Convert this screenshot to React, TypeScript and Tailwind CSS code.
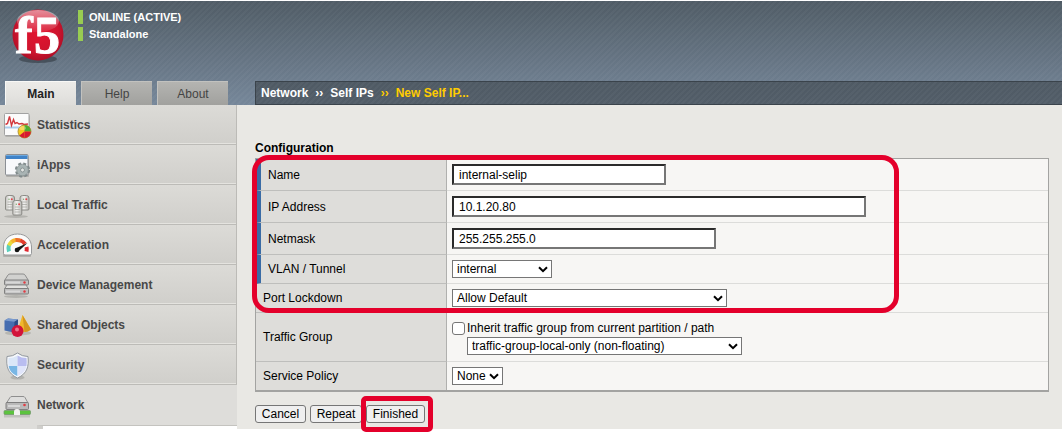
import type { ReactNode } from "react";

const Shadow = () => (
  <ellipse cx="16" cy="27.500" rx="12" ry="1.500" fill="#8f8e8a" opacity=".45" />
);

const StatisticsIcon = () => (
  <svg width="32" height="32" viewBox="0 0 32 32" aria-hidden="true">
    <rect x="5" y="6" width="25" height="22" rx="1.500" fill="#8f8e8a" opacity=".45" />
    <rect x="4.500" y="4.500" width="24.500" height="22" rx="1" fill="#fbfbfb" stroke="#a2a2a2" />
    <path d="M5 18.500h23.500" stroke="#a9cdec" strokeWidth="2" />
    <path d="M5.500 15.500l2-1 2-7 2 9 2-6 1.500 4 2-1 2 1.500 3-.5 2 1 4-.5" fill="none" stroke="#d2373c" strokeWidth="1.400" />
    <circle cx="24.500" cy="22.500" r="6.500" fill="#f5c91c" stroke="#a1842a" strokeWidth=".8" />
    <path d="M24.500 22.500V16.100A6.400 6.400 0 0 1 30.900 22.500Z" fill="#4bad35" />
    <path d="M24.500 22.500H30.900A6.400 6.400 0 0 1 24.500 28.900Z" fill="#d71930" />
    <path d="M24.500 22.500V28.900A6.400 6.400 0 0 1 19.500 26.500Z" fill="#d71930" />
    <ellipse cx="22.500" cy="19" rx="3.500" ry="2" fill="#fff" opacity=".3" />
  </svg>
);

const IAppsIcon = () => (
  <svg width="32" height="32" viewBox="0 0 32 32" aria-hidden="true">
    <rect x="6" y="7" width="23" height="21" rx="1" fill="#8f8e8a" opacity=".5" />
    <rect x="5.500" y="5.500" width="22.500" height="20.500" rx="1" fill="#f8f9fb" stroke="#8b8f94" />
    <rect x="6" y="6" width="21.500" height="4" fill="#3f83c8" />
    <path d="M6 6.500h21.500" stroke="#6da9df" />
    <circle cx="22.500" cy="21" r="6.300" fill="none" stroke="#7f898a" strokeWidth="2.600" strokeDasharray="2.900 2.048" />
    <circle cx="22.500" cy="21" r="5.800" fill="#a9b4b4" stroke="#8b9596" strokeWidth=".8" />
    <circle cx="22.500" cy="21" r="2" fill="#e2e4e2" stroke="#7f898a" strokeWidth=".8" />
  </svg>
);

const Tower = ({ x, y }: { x: number; y: number }) => (
  <g>
    <path
      d={`M${x} ${y + 3}q0-2.500 2.500-2.500h4q2.500 0 2.500 2.500v11q0 1-1 1h-7q-1 0-1-1z`}
      fill="url(#tower)"
      stroke="#85847f"
      strokeWidth=".9"
    />
    <path d={`M${x + 2} ${y + 7}h5M${x + 2} ${y + 9.5}h5M${x + 2} ${y + 12}h5`} stroke="#aaa9a5" strokeWidth=".8" />
    <circle cx={x + 6.3} cy={y + 4.3} r="1" fill="#e0434a" />
    <circle cx={x + 3.5} cy={y + 4.3} r=".7" fill="#7da56c" />
  </g>
);

const LocalTrafficIcon = () => (
  <svg width="32" height="32" viewBox="0 0 32 32" aria-hidden="true">
    <defs>
      <linearGradient id="tower">
        <stop offset="0" stopColor="#c2c1bd" />
        <stop offset=".45" stopColor="#f2f2f0" />
        <stop offset="1" stopColor="#b4b3af" />
      </linearGradient>
    </defs>
    <Shadow />
    <Tower x={5.5} y={6} />
    <Tower x={20} y={6} />
    <Tower x={12.8} y={11} />
  </svg>
);

const AccelerationIcon = () => (
  <svg width="32" height="32" viewBox="0 0 32 32" aria-hidden="true">
    <path d="M3 23v4q0 1 1 1h26q1 0 1-1v-4z" fill="#8f8e8a" opacity=".5" />
    <path d="M3.500 24.500V18C3.500 10.500 9 5 17.500 5S31.500 10.500 31.500 18v6.500q0 1.500-1.500 1.500H5q-1.500 0-1.500-1.500z" fill="#fbfbfb" stroke="#97999a" />
    <g fill="none" strokeWidth="4">
      <path d="M9 22.500A9.500 9.500 0 0 1 9 16" stroke="#5cd0bd" />
      <path d="M9 16.500A9.500 9.500 0 0 1 12 12.500" stroke="#e9d93e" />
      <path d="M11.600 12.900A9.500 9.500 0 0 1 16 11" stroke="#f6b42b" />
      <path d="M15.500 11A9.500 9.500 0 0 1 21 11.800" stroke="#ef6f29" />
      <path d="M20.500 11.500A9.500 9.500 0 0 1 25 15" stroke="#e23c2d" />
      <path d="M26.500 18A10 10 0 0 1 26.500 22.500" stroke="#df2830" />
    </g>
    <path d="M27.500 14L18.200 22.500A2.200 2.200 0 0 1 15.800 19.300Z" fill="#131313" />
    <circle cx="17" cy="21" r="2.300" fill="#131313" />
  </svg>
);

const DeviceIcon = () => (
  <svg width="32" height="32" viewBox="0 0 32 32" aria-hidden="true">
    <Shadow />
    <path d="M4.500 11.500L8 6q.5-1 2-1h13q1.500 0 2 1L28.500 11.500z" fill="#d1d1cf" stroke="#858585" strokeWidth=".9" />
    <rect x="4.500" y="11" width="24" height="5" rx="1" fill="#bfbfbf" stroke="#777" strokeWidth=".9" />
    <path d="M4.500 20L7 16h19L28.500 20z" fill="#e1e1df" stroke="#858585" strokeWidth=".9" />
    <rect x="4.500" y="19.500" width="24" height="5.500" rx="1" fill="#bdbdbd" stroke="#777" strokeWidth=".9" />
    <path d="M6 13.500h14M6 22.500h14" stroke="#d8d8d8" strokeWidth="2" />
    <circle cx="24.500" cy="13.500" r="1.200" fill="#e23b42" />
    <circle cx="24.500" cy="22.500" r="1.200" fill="#e23b42" />
  </svg>
);

const SharedObjectsIcon = () => (
  <svg width="32" height="32" viewBox="0 0 32 32" aria-hidden="true">
    <ellipse cx="18" cy="24" rx="13" ry="2.500" fill="#8f8e8a" opacity=".4" />
    <path d="M4.500 11.500L8 9.500 18 10.500 17.500 21.500 14 23.500 4.500 21.500z" fill="#466db0" />
    <path d="M4.500 11.500L8 9.500 18 10.500 14.500 12.800z" fill="#7b9bcd" />
    <path d="M14.500 12.800L18 10.500 17.500 21.500 14 23.500z" fill="#2b4a86" />
    <path d="M22.500 6L31 20.500Q26 24.500 17.500 22z" fill="#f0b82c" />
    <path d="M22.500 6L31 20.500Q28 23 24.500 23z" fill="#d49620" />
    <circle cx="17.500" cy="22" r="6" fill="#d2133a" />
    <circle cx="17" cy="20.500" r="2" fill="#f28ca0" opacity=".8" />
  </svg>
);

const SecurityIcon = () => (
  <svg width="32" height="32" viewBox="0 0 32 32" aria-hidden="true">
    <ellipse cx="17.500" cy="28.500" rx="7" ry="2" fill="#8f8e8a" opacity=".45" />
    <path d="M17.500 4Q22 7.500 28 7.500C29 17 27.500 24.500 17.500 29C7.500 24.500 6 17 7 7.500Q13 7.500 17.500 4z" fill="#f7f9fc" stroke="#92989f" />
    <path d="M17.500 6.500V17H8.500Q8 13 8.500 9Q13.500 9 17.500 6.500z" fill="#dbe7f8" />
    <path d="M17.500 6.500V17H26.500Q27 13 26.500 9Q21.500 9 17.500 6.500z" fill="#b9bdf0" />
    <path d="M17.500 17V27.300Q9.500 24 8.600 17z" fill="#79b6e4" />
    <path d="M17.500 17V27.300Q25.500 24 26.400 17z" fill="#e0e5fa" />
  </svg>
);

const NetworkIcon = () => (
  <svg width="32" height="32" viewBox="0 0 32 32" aria-hidden="true">
    <rect x="4" y="24" width="26" height="4.500" fill="#8f8e8a" opacity=".35" />
    <path d="M6.500 14L10 8.500q.5-1 2-1h11q1.500 0 2 1L28 14z" fill="#dededd" stroke="#858585" strokeWidth=".9" />
    <rect x="6" y="13.500" width="22.500" height="7" rx="1" fill="#b9b9b9" stroke="#777" strokeWidth=".9" />
    <path d="M8 17h12" stroke="#d8d8d8" strokeWidth="2" />
    <circle cx="24.500" cy="16" r="1.300" fill="#e23b42" />
    <rect x="4" y="21.500" width="26.500" height="4" rx="1" fill="#5cc33e" stroke="#71936a" strokeWidth=".7" />
    <path d="M14 26v-3q0-3 2.500-3h1q2.500 0 2.500 3v3z" fill="#f3f3f1" />
  </svg>
);

const Logo = () => (
  <svg width="56" height="60" viewBox="0 0 56 60" role="img" aria-label="f5" className="overflow-visible">
    <defs>
      <radialGradient id="ball" cx=".5" cy=".45" r=".6">
        <stop offset="0" stopColor="#e2142f" />
        <stop offset=".65" stopColor="#cf142e" />
        <stop offset="1" stopColor="#a30d24" />
      </radialGradient>
      <linearGradient id="gloss" x2="0" y2="1">
        <stop offset="0" stopColor="#fff" stopOpacity=".75" />
        <stop offset="1" stopColor="#fff" stopOpacity=".1" />
      </linearGradient>
    </defs>
    <ellipse cx="28" cy="51" rx="19" ry="4" fill="#2b333a" opacity=".55" />
    <circle cx="28" cy="27" r="25.500" fill="url(#ball)" />
    <ellipse cx="28" cy="13" rx="21" ry="11" fill="url(#gloss)" opacity=".7" />
    <g fill="#fff" stroke="#fff" fontFamily="'Liberation Serif', serif" fontWeight="700">
      <text x="5" y="45" fontSize="53">f</text>
      <text x="24" y="45" fontSize="52">5</text>
    </g>
  </svg>
);

const navItems: { label: string; icon: ReactNode }[] = [
  { label: "Statistics", icon: <StatisticsIcon /> },
  { label: "iApps", icon: <IAppsIcon /> },
  { label: "Local Traffic", icon: <LocalTrafficIcon /> },
  { label: "Acceleration", icon: <AccelerationIcon /> },
  { label: "Device Management", icon: <DeviceIcon /> },
  { label: "Shared Objects", icon: <SharedObjectsIcon /> },
  { label: "Security", icon: <SecurityIcon /> },
];

const Select = ({ id, value, width }: { id: string; value: string; width: string }) => (
  <span className={`relative inline-flex max-w-full ${width}`}>
    <select
      id={id}
      className="h-[18px] w-full appearance-none border border-[#767676] bg-white pr-3 pl-1 text-xs leading-4 text-black"
    >
      <option>{value}</option>
    </select>
    <svg className="pointer-events-none absolute top-1.5 right-1" width="10" height="7" viewBox="0 0 10 7" aria-hidden="true">
      <path d="M1 1.200L5 5.200L9 1.200" fill="none" stroke="#000" strokeWidth="2" />
    </svg>
  </span>
);

const TextBox = ({ id, value, width }: { id: string; value: string; width: string }) => (
  <input
    id={id}
    type="text"
    defaultValue={value}
    className={`block h-[21px] max-w-full border-2 border-t-[#2b2b2b] border-r-[#767676] border-b-[#767676] border-l-[#2b2b2b] bg-white px-[5px] text-xs text-black ${width}`}
  />
);

const Row = ({
  id,
  label,
  required,
  height,
  children,
}: {
  id: string;
  label: string;
  required?: boolean;
  height: string;
  children: ReactNode;
}) => (
  <tr className={`group ${height}`}>
    <th
      scope="row"
      className={`w-[191px] border-r border-b border-r-[#b0b0ae] border-b-[#bebebc] bg-[#dedddA] p-0 pl-[7px] text-left align-middle font-normal group-last:border-b-0 ${
        required ? "border-l-[5px] border-l-[#3a6ba5]" : ""
      }`}
    >
      <label htmlFor={id}>{label}</label>
    </th>
    <td className="border-b border-[#dcdcda] bg-[#f7f6f4] py-0 pr-2 pl-[5px] align-middle group-last:border-b-0">
      {children}
    </td>
  </tr>
);

const button =
  "h-[18px] rounded-[3px] border border-[#767676] bg-[#efefef] text-xs leading-4 text-black";

export default function App() {
  return (
    <div className="min-h-screen bg-white pt-px font-['Liberation_Sans',Arial,sans-serif] text-xs text-black">
      <header className="flex h-[104px] flex-col justify-between bg-[repeating-linear-gradient(135deg,rgba(255,255,255,0.03)_0px,rgba(255,255,255,0.03)_2px,transparent_2px,transparent_4px),linear-gradient(#505c66,#76879a)]">
        <div className="flex pt-[7px] pl-[10px]">
          <Logo />
          <div className="flex flex-col gap-[3px] pt-[2px] pl-3 text-[11px] leading-[14px] font-bold text-white">
            <p className="border-l-[5px] border-[#98cc52] pl-[6px]">ONLINE (ACTIVE)</p>
            <p className="border-l-[5px] border-[#98cc52] pl-[6px]">Standalone</p>
          </div>
        </div>
        <div className="flex h-6">
          <nav className="flex w-[255px] shrink-0 gap-[5px] pl-[5px]" aria-label="Sections">
            <button className="w-[71px] border-t border-l border-[#f8f8f6] bg-linear-to-b from-[#ecebe8] to-[#dedddA] font-bold text-[#222]">
              Main
            </button>
            <button className="w-[71px] border-t border-l border-[#c2c2bf] bg-linear-to-b from-[#b4b4b1] to-[#a1a19e] text-[#444]">
              Help
            </button>
            <button className="w-[71px] border-t border-l border-[#c2c2bf] bg-linear-to-b from-[#b4b4b1] to-[#a1a19e] text-[#444]">
              About
            </button>
          </nav>
          <nav
            className="flex flex-1 items-center gap-[7px] border border-r-0 border-[#3a434b] bg-[repeating-linear-gradient(135deg,rgba(255,255,255,0.03)_0px,rgba(255,255,255,0.03)_2px,transparent_2px,transparent_4px),linear-gradient(#4f5a64,#525d68)] pl-[5px] font-bold text-white"
            aria-label="Breadcrumb"
          >
            <a href="#network">Network</a>
            <span>››</span>
            <a href="#self-ips">Self IPs</a>
            <span className="text-[#fc0]">››</span>
            <a href="#new" className="text-[#fc0]">
              New Self IP...
            </a>
          </nav>
        </div>
      </header>

      <div className="flex bg-[#e9e8e4]">
        <aside className="w-[237px] shrink-0 bg-[#dedddA] font-bold text-[#484848]">
          <ul>
            {navItems.map((item) => (
              <li key={item.label}>
                <a
                  href="#nav"
                  className="flex h-10 items-center gap-[5px] border-r border-b border-[#bcbbb7] bg-linear-to-b from-[#dcdbd7] to-[#d0cfcb] shadow-[inset_0_-1px_0_#e4e3df]"
                >
                  {item.icon}
                  {item.label}
                </a>
              </li>
            ))}
            <li>
              <a href="#network" className="flex h-10 items-center gap-[5px]">
                <NetworkIcon />
                Network
              </a>
              <div className="ml-[37px] h-1 border-t border-l-[6px] border-t-[#c4c3bf] border-l-[#cfcecb] bg-white" />
            </li>
          </ul>
        </aside>

        <main className="min-w-0 flex-1 pt-9 pr-[13px] pl-[18px]">
          <h2 className="leading-[14px] font-bold">Configuration</h2>
          <div className="relative mt-[3px]">
            <table className="w-full border-separate border-spacing-0 border border-b-2 border-[#a3a3a1]">
              <tbody>
                <Row id="name" label="Name" required height="h-8">
                  <TextBox id="name" value="internal-selip" width="w-[214px]" />
                </Row>
                <Row id="ip" label="IP Address" required height="h-8">
                  <TextBox id="ip" value="10.1.20.80" width="w-[414px]" />
                </Row>
                <Row id="netmask" label="Netmask" required height="h-8">
                  <TextBox id="netmask" value="255.255.255.0" width="w-[264px]" />
                </Row>
                <Row id="vlan" label="VLAN / Tunnel" required height="h-[29px]">
                  <div className="flex">
                    <Select id="vlan" value="internal" width="w-[100px]" />
                  </div>
                </Row>
                <Row id="lockdown" label="Port Lockdown" height="h-[29px]">
                  <div className="flex">
                    <Select id="lockdown" value="Allow Default" width="w-[275px]" />
                  </div>
                </Row>
                <Row id="group" label="Traffic Group" height="h-[49px]">
                  <div className="flex h-[18px] items-center gap-[2px]">
                    <input
                      id="inherit"
                      type="checkbox"
                      className="size-[13px] appearance-none rounded-[3px] border border-[#767676] bg-white checked:bg-[#0075ff]"
                    />
                    <label htmlFor="inherit">Inherit traffic group from current partition / path</label>
                  </div>
                  <div className="flex pl-[15px]">
                    <Select id="group" value="traffic-group-local-only (non-floating)" width="w-[275px]" />
                  </div>
                </Row>
                <Row id="policy" label="Service Policy" height="h-7">
                  <div className="flex">
                    <Select id="policy" value="None" width="w-[51px]" />
                  </div>
                </Row>
              </tbody>
            </table>
            <div className="pointer-events-none absolute -top-[3px] right-[150px] -left-[3px] h-[158px] rounded-[17px] border-5 border-[#e4002b]" />
          </div>
          <div className="mt-[13px] flex gap-1">
            <button className={`w-[51px] ${button}`}>Cancel</button>
            <button className={`w-[52px] ${button}`}>Repeat</button>
            <span className="relative flex">
              <button className={`w-[59px] ${button}`}>Finished</button>
              <span className="pointer-events-none absolute -top-[9px] -right-2 -bottom-[9px] -left-[5px] rounded-[5px] border-5 border-[#e4002b]" />
            </span>
          </div>
        </main>
      </div>
    </div>
  );
}
